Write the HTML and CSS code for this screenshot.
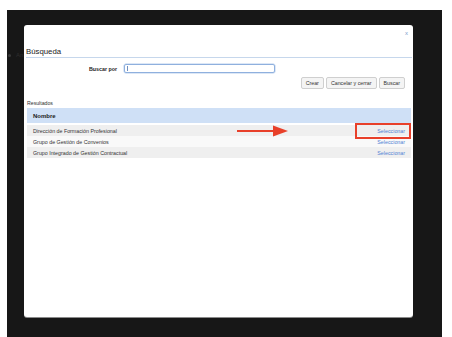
FILE: index.html
```html
<!DOCTYPE html>
<html lang="es">
<head>
<meta charset="utf-8">
<title>Búsqueda</title>
<link rel="stylesheet" href="styles.css">
</head>
<body>
<div class="backdrop">
  <div class="behind"><span class="dot"></span><span class="behind-text">An</span></div>
  <div class="modal">
    <div class="close-row"><span class="close">x</span></div>
    <div class="title">Búsqueda</div>
    <div class="search-row">
      <label class="search-label">Buscar por</label>
      <div class="search-input"><span class="caret"></span></div>
    </div>
    <div class="button-row">
      <button class="btn">Crear</button>
      <button class="btn">Cancelar y cerrar</button>
      <button class="btn">Buscar</button>
    </div>
    <div class="results-label">Resultados</div>
    <div class="table">
      <div class="thead">Nombre</div>
      <div class="row odd"><span>Dirección de Formación Profesional</span><a class="select">Seleccionar</a>
        <span class="highlight"></span>
        <svg class="arrow" width="52" height="12" viewBox="0 0 52 12"><line x1="0" y1="6" x2="38" y2="6" stroke="#e8402a" stroke-width="2"/><polygon points="36,0.5 51,6 36,11.5" fill="#e8402a"/></svg>
      </div>
      <div class="row even"><span>Grupo de Gestión de Convenios</span><a class="select">Seleccionar</a></div>
      <div class="row odd"><span>Grupo Integrado de Gestión Contractual</span><a class="select">Seleccionar</a></div>
    </div>
  </div>
</div>
</body>
</html>
```

FILE: styles.css
```css
html, body {
  margin: 0;
  padding: 0;
  background: #ffffff;
}
body {
  font-family: "Liberation Sans", Arial, sans-serif;
}
.backdrop {
  margin: 10px 0 0 7px;
  width: 435px;
  height: 327px;
  background: #171717;
  display: flex;
  align-items: flex-start;
  padding: 15px 0 0 1px;
  box-sizing: border-box;
}
.behind {
  width: 16px;
  margin-top: 27px;
  display: flex;
  align-items: center;
  gap: 5px;
  overflow: hidden;
}
.dot {
  width: 3px;
  height: 3px;
  background: #3a3a3a;
  border-radius: 50%;
  flex: none;
}
.behind-text {
  font-size: 6px;
  color: #2e2e2e;
}
.modal {
  width: 389px;
  height: 292px;
  background: #ffffff;
  border-radius: 3px;
  box-shadow: 0 1px 0 #8a8a8a;
  padding: 0 1px 0 2px;
  box-sizing: border-box;
  position: relative;
}
.close-row {
  height: 22px;
  display: flex;
  justify-content: flex-end;
  padding: 5px 4px 0 0;
  box-sizing: border-box;
}
.close {
  font-size: 6px;
  line-height: 6px;
  color: #7c9ccb;
}
.title {
  font-size: 7.8px;
  line-height: 10px;
  height: 10px;
  color: #1a1a1a;
  border-bottom: 1.5px solid #c6d7ec;
}
.search-row {
  display: flex;
  align-items: center;
  gap: 7px;
  margin-top: 6px;
}
.search-label {
  width: 91px;
  text-align: right;
  font-size: 5.3px;
  font-weight: bold;
  color: #222;
}
.search-input {
  width: 151px;
  height: 9px;
  border: 1px solid #8fb0de;
  border-radius: 2px;
  box-shadow: 0 0 0 0.5px #b9cfee;
  box-sizing: border-box;
  display: flex;
  align-items: center;
  padding-left: 2px;
}
.caret {
  width: 1px;
  height: 5px;
  background: #6f8fc0;
}
.button-row {
  display: flex;
  justify-content: flex-end;
  gap: 2px;
  margin-top: 4px;
  padding-right: 7px;
}
.btn {
  height: 12px;
  padding: 0 4px;
  font-family: "Liberation Sans", Arial, sans-serif;
  font-size: 5.3px;
  color: #333;
  background: #f4f4f4;
  border: 1px solid #cfcfcf;
  border-radius: 2px;
}
.results-label {
  margin-top: 11px;
  padding-left: 1px;
  font-size: 5.2px;
  line-height: 6px;
  color: #333;
}
.table {
  margin: 2px 1px 0 1px;
}
.thead {
  height: 15px;
  background: #cfe0f6;
  font-size: 6px;
  font-weight: bold;
  color: #222;
  display: flex;
  align-items: center;
  padding-left: 6px;
  margin-bottom: 2px;
}
.row {
  height: 11px;
  display: flex;
  align-items: center;
  justify-content: space-between;
  padding: 0 6px;
  font-size: 5.3px;
  color: #333;
  position: relative;
}
.row.odd {
  background: #efefef;
}
.row.even {
  background: #f9f9f9;
}
.select {
  color: #4f82d4;
}
.highlight {
  position: absolute;
  right: 0;
  top: -2px;
  width: 56px;
  height: 16px;
  border: 2px solid #e8402a;
  box-sizing: border-box;
  z-index: 2;
}
.arrow {
  position: absolute;
  left: 210px;
  top: 0;
  z-index: 2;
}
```
